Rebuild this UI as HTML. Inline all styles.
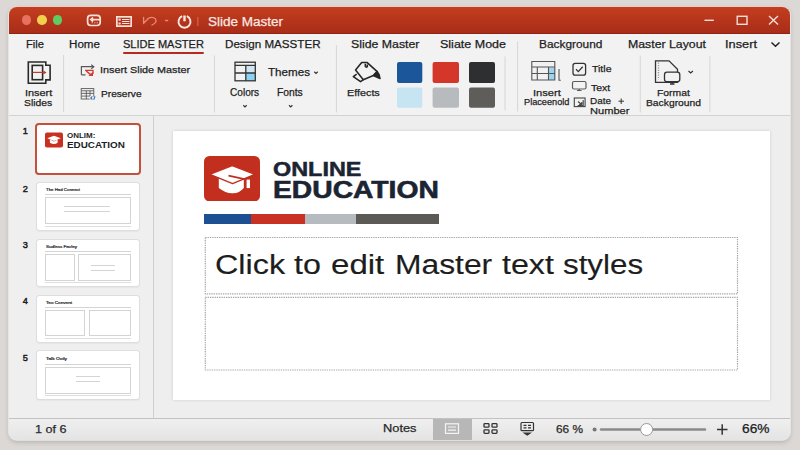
<!DOCTYPE html><html><head><meta charset="utf-8"><style>
*{margin:0;padding:0;box-sizing:border-box}
html,body{width:800px;height:450px;overflow:hidden}
body{background:#dbd8d5;font-family:"Liberation Sans",sans-serif;position:relative}
.t{position:absolute;white-space:nowrap;line-height:1;transform-origin:0 0;-webkit-text-stroke:0.25px currentColor}
.a{position:absolute}
</style></head><body><div class="a" style="left:9px;top:7px;width:780.5px;height:433px;border-radius:8px;background:#f2f2f2;overflow:hidden;box-shadow:0 0 0 1px rgba(255,255,255,.55),0 2px 5px rgba(0,0,0,.2)">
</div>
<div class="a" style="left:9px;top:7px;width:780.5px;height:27px;border-radius:8px 8px 0 0;background:linear-gradient(#c33e1f,#a82c18);box-shadow:inset 0 -1px 0 #902412,0 -0.5px 0 #e6b3a5"></div>
<div class="a" style="left:21.6px;top:15.3px;width:9.4px;height:9.4px;border-radius:50%;background:#e9715f"></div>
<div class="a" style="left:37.3px;top:15.3px;width:9.4px;height:9.4px;border-radius:50%;background:#f2cf4c"></div>
<div class="a" style="left:52.9px;top:15.3px;width:9.4px;height:9.4px;border-radius:50%;background:#5fcb63"></div>
<div class="t" style="left:207.50px;top:14.73px;font-size:13.08px;color:#fbe9e4;transform:scaleX(1.032);">Slide Master</div>
<svg class="a" style="left:0;top:0" width="800" height="34">
<g fill="none" stroke="#f8e2da" stroke-width="1.7">
<rect x="87.6" y="15.3" width="12.6" height="10.2" rx="3.2"/>
<path d="M100 19.6h-9.2M93 17.5l-2.2 2.1 2.2 2.1"/>
</g>
<path d="M91.5 22.8h8" stroke="#e9a593" stroke-width="1" stroke-dasharray="1.5 1"/>
<g fill="none" stroke="#f8e2da" stroke-width="1.7">
<rect x="116.85" y="16.85" width="14.3" height="9.3"/>
</g>
<g fill="#f8e2da"><rect x="118.5" y="18.6" width="2.2" height="2"/><rect x="118.5" y="22.5" width="2.2" height="2"/>
<rect x="122" y="19" width="7.5" height="1"/><rect x="122" y="21" width="7.5" height="1"/><rect x="122" y="23" width="7.5" height="1"/></g>
<g fill="none" stroke="#e98a72" stroke-width="1.3" stroke-linecap="round"><path d="M143.6 17.5v6M143.6 23.3l4.3-4.3"/><path d="M148 18.5q4.5-2.3 7.5 0.5q2 3.5-3.5 6"/></g>
<path d="M165 20.5h3.2" stroke="#e98a72" stroke-width="1.4"/>
<g fill="none" stroke="#fae8e3" stroke-width="1.9"><path d="M182.2 16.2a6 6 0 1 0 4.6 0"/></g>
<path d="M184.5 15.5v5.8" stroke="#fae8e3" stroke-width="2.4"/>
<path d="M197.9 17v9" stroke="#d8705c" stroke-width="1"/>
<g stroke="#f6ddd6" stroke-width="1.4" fill="none"><path d="M704.5 20.3h9.3"/><rect x="737.2" y="16.3" width="9.8" height="8"/><path d="M769 16l9 8.5M778 16l-9 8.5"/></g>
</svg>
<div class="t" style="left:26.00px;top:39.05px;font-size:11.05px;color:#1e1e1e;transform:scaleX(1.011);">File</div>
<div class="t" style="left:69.00px;top:39.05px;font-size:11.05px;color:#1e1e1e;transform:scaleX(1.052);">Home</div>
<div class="t" style="left:122.90px;top:39.05px;font-size:11.05px;color:#1e1e1e;">SLIDE MASTER</div>
<div class="t" style="left:225.00px;top:39.05px;font-size:11.05px;color:#1e1e1e;transform:scaleX(1.052);">Design MASSTER</div>
<div class="t" style="left:350.60px;top:39.05px;font-size:11.05px;color:#1e1e1e;transform:scaleX(1.114);">Slide Master</div>
<div class="t" style="left:439.50px;top:39.05px;font-size:11.05px;color:#1e1e1e;transform:scaleX(1.131);">Sliate Mode</div>
<div class="t" style="left:538.60px;top:39.05px;font-size:11.05px;color:#1e1e1e;transform:scaleX(1.075);">Background</div>
<div class="t" style="left:627.50px;top:39.05px;font-size:11.05px;color:#1e1e1e;transform:scaleX(1.114);">Master Layout</div>
<div class="t" style="left:725.00px;top:39.05px;font-size:11.05px;color:#1e1e1e;transform:scaleX(1.158);">Insert</div>
<div class="a" style="left:123px;top:51.5px;width:81px;height:2px;background:#b52b1c;border-radius:1px"></div>
<svg class="a" style="left:0;top:0" width="800" height="120">
<path d="M771.5 42.5l4 3.8 4-3.8" fill="none" stroke="#222" stroke-width="1.5"/>
<g stroke="#d6d6d6" stroke-width="1"><path d="M63.6 55v57M214.5 55.5v57M336.4 45v67.4M505 56.4v54M517.6 41.5v70M640.3 55.5v57M709.9 56.4v56"/></g>
</svg>
<svg class="a" style="left:0;top:0" width="800" height="116">
<!-- insert slides icon -->
<g fill="none" stroke="#2a2a2a" stroke-width="1.6">
<path d="M28.3 62h17.5v3.3h4.3v14.6h-4.3v3.3H28.3z"/>
<rect x="32.2" y="65.4" width="10.4" height="14.3"/>
</g>
<path d="M32.5 72.4h11.5" stroke="#c0392b" stroke-width="1.2"/>
<path d="M43.5 70.4l3 2-3 2z" fill="#c0392b"/>
<!-- insert slide master icon -->
<g fill="none" stroke-width="1.2">
<path d="M81.4 74.8V66.7H93.6M81.4 74.8H85.5" stroke="#585858"/>
<path d="M91.2 64.6L93.8 66.7L91.2 68.8" stroke="#585858"/>
<path d="M85 70.3H93V74" stroke="#d23b2e" stroke-width="1.3"/>
<path d="M86.2 71L91 74.8" stroke="#d23b2e" stroke-width="1.5"/>
</g>
<path d="M88.3 76H93V71.8Z" fill="#d23b2e"/>
<!-- preserve icon -->
<g fill="none" stroke="#5a5a5a" stroke-width="0.9">
<rect x="81.2" y="88.6" width="12.6" height="10.4"/>
<path d="M81.2 90.8h12.6M81.2 93.4h12.6M81.2 96.1h9M86.3 90.8v8.2M90 90.8v5.3"/>
</g>
<path d="M89.6 96.6h5.5v3h-5.5z" fill="#f2f2f2"/>
<path d="M92.3 96.4l-1.5 1.5 1.5 1.5M95 96.2l-1.2 3.4" stroke="#2f6fb5" stroke-width="1.1" fill="none"/>
<!-- themes grid icon -->
<rect x="245.8" y="65.3" width="9.3" height="7.7" fill="#cfe7f4"/>
<rect x="245.8" y="73" width="9.3" height="7.6" fill="#8fd1f1"/>
<g fill="none" stroke="#333" stroke-width="1.3">
<rect x="235" y="62.2" width="20.3" height="18.6"/>
<path d="M235 65.3h20.3M235 73h20.3M245.8 65.3v15.5"/>
</g>
<g fill="none" stroke="#333" stroke-width="1.2">
<path d="M314.3 71.8l1.7 1.6 1.7-1.6M243.3 105.3l1.7 1.6 1.7-1.6M289 105.3l1.7 1.6 1.7-1.6"/>
</g>
<!-- effects icon -->
<g transform="translate(340 55) scale(0.1111)" fill="none" stroke="#262626" stroke-width="14" stroke-linejoin="round">
<path d="M140 135L195 68H245L335 150L300 185L210 222Z"/>
<path d="M150 172L120 195L185 240L210 222"/>
<path d="M228 78V103Q236 116 246 103V86"/>
<path d="M300 185L335 150L352 178L360 212Z" fill="#262626"/>
</g>
<!-- swatches -->
<rect x="397" y="61.9" width="25.3" height="21" rx="2" fill="#1b569a"/>
<rect x="432.6" y="61.9" width="26.4" height="21" rx="2" fill="#d4372a"/>
<rect x="469" y="61.9" width="26" height="21" rx="2" fill="#2e2f31"/>
<rect x="397" y="87.5" width="25.3" height="20.2" rx="2" fill="#c6e4f1"/>
<rect x="432.6" y="87.5" width="26.4" height="20.2" rx="2" fill="#b8bbbe"/>
<rect x="469" y="87.5" width="26" height="20.2" rx="2" fill="#5e5d5a"/>
<!-- insert placeholder icon -->
<rect x="548.5" y="67.5" width="6.5" height="12.5" fill="#9ed5ee"/>
<g fill="none" stroke="#555" stroke-width="1.1">
<path d="M531.8 61.5h23v18.5h-23zM531.8 67h23M531.8 73.5h23M537.3 67v13M548.5 67v13M559 69v11.2h1.8"/>
</g>
<!-- title checkbox -->
<g fill="none" stroke="#333" stroke-width="1.3">
<rect x="573" y="63.3" width="12.6" height="11.8" rx="2.2"/>
<path d="M576 69.3l2.3 2.3 4.4-4.8"/>
</g>
<!-- text monitor -->
<g fill="none" stroke="#5a5a5a" stroke-width="1.2">
<rect x="572.5" y="81.5" width="13.5" height="7.5" rx="1.5"/>
<path d="M577 90.5h4.5M579.2 89v1.5"/>
</g>
<!-- date icon -->
<g fill="none" stroke="#444" stroke-width="1.1">
<rect x="574.3" y="98" width="10.8" height="8.6"/>
<path d="M578 101.5l3.5 3M581.8 104.5h-2.6M581.8 104.5v-2.6M583.2 100v5.5h-5.5"/>
</g>
<path d="M618.5 101.2h5.5M621.2 98.5v5.5" stroke="#333" stroke-width="1"/>
<!-- format background icon -->
<g fill="none" stroke="#333" stroke-width="1.3">
<path d="M655.5 60.8h13.5l8.5 8.5v13h-22z"/>
<path d="M658.5 62.5v17" stroke="#999" stroke-dasharray="1.2 1.2"/>
<rect x="664.5" y="72.2" width="15.3" height="9.5" rx="2.5" fill="#f2f2f2"/>
<path d="M670 84h4.5M672.2 81.8v2.2"/>
</g>
<path d="M688.5 71l2.2 2 2.2-2" fill="none" stroke="#333" stroke-width="1.2"/>
</svg>
<div class="t" style="left:24.70px;top:88.28px;font-size:9.59px;color:#1e1e1e;transform:scaleX(1.138);">Insert</div>
<div class="t" style="left:24.20px;top:97.73px;font-size:9.88px;color:#1e1e1e;transform:scaleX(1.047);">Slides</div>
<div class="t" style="left:99.70px;top:65.08px;font-size:9.59px;color:#1e1e1e;transform:scaleX(1.129);">Insert Slide Master</div>
<div class="t" style="left:100.90px;top:88.78px;font-size:9.59px;color:#1e1e1e;transform:scaleX(1.058);">Preserve</div>
<div class="t" style="left:267.50px;top:66.90px;font-size:10.76px;color:#1e1e1e;transform:scaleX(1.081);">Themes</div>
<div class="t" style="left:230.00px;top:87.69px;font-size:10.17px;color:#1e1e1e;transform:scaleX(0.993);">Colors</div>
<div class="t" style="left:276.50px;top:87.69px;font-size:10.17px;color:#1e1e1e;transform:scaleX(1.014);">Fonts</div>
<div class="t" style="left:347.20px;top:88.33px;font-size:9.88px;color:#1e1e1e;transform:scaleX(1.092);">Effects</div>
<div class="t" style="left:532.60px;top:87.53px;font-size:9.88px;color:#1e1e1e;transform:scaleX(1.129);">Insert</div>
<div class="t" style="left:524.00px;top:96.68px;font-size:9.59px;color:#1e1e1e;transform:scaleX(0.959);">Placeenold</div>
<div class="t" style="left:591.50px;top:63.53px;font-size:9.88px;color:#1e1e1e;transform:scaleX(1.065);">Title</div>
<div class="t" style="left:590.80px;top:82.53px;font-size:9.88px;color:#1e1e1e;transform:scaleX(1.059);">Text</div>
<div class="t" style="left:590.00px;top:96.43px;font-size:9.88px;color:#1e1e1e;transform:scaleX(1.006);">Date</div>
<div class="t" style="left:590.00px;top:106.13px;font-size:9.88px;color:#1e1e1e;transform:scaleX(1.124);">Number</div>
<div class="t" style="left:656.70px;top:87.53px;font-size:9.88px;color:#1e1e1e;transform:scaleX(1.051);">Format</div>
<div class="t" style="left:646.20px;top:97.53px;font-size:9.88px;color:#1e1e1e;transform:scaleX(1.043);">Background</div>
<div class="a" style="left:9px;top:114.5px;width:780.5px;height:1.5px;background:#d2d2d2"></div>
<div class="a" style="left:9px;top:116px;width:144px;height:302px;background:#efefef"></div>
<div class="a" style="left:153px;top:116px;width:1px;height:302px;background:#cfcfcf"></div>
<div class="a" style="left:154px;top:116px;width:635.5px;height:302px;background:#eeeeee"></div>
<div class="a" style="left:173px;top:131px;width:597px;height:269px;background:#fff;box-shadow:0 0 3px rgba(0,0,0,.14)"></div>
<div class="t" style="left:22.80px;top:126.85px;font-size:9.16px;color:#1a1a1a;-webkit-text-stroke:0.45px #1a1a1a;">1</div>
<div class="t" style="left:22.80px;top:184.85px;font-size:9.16px;color:#1a1a1a;-webkit-text-stroke:0.45px #1a1a1a;">2</div>
<div class="t" style="left:22.80px;top:240.65px;font-size:9.16px;color:#1a1a1a;-webkit-text-stroke:0.45px #1a1a1a;">3</div>
<div class="t" style="left:22.80px;top:296.95px;font-size:9.16px;color:#1a1a1a;-webkit-text-stroke:0.45px #1a1a1a;">4</div>
<div class="t" style="left:22.80px;top:353.55px;font-size:9.16px;color:#1a1a1a;-webkit-text-stroke:0.45px #1a1a1a;">5</div>
<div class="a" style="left:35px;top:123.3px;width:106.3px;height:51.5px;background:#fff;border:2.2px solid #c4513c;border-radius:4px"></div>
<svg class="a" style="left:45px;top:132.3px" width="18" height="16" viewBox="0 0 57 47">
<rect width="57" height="47" rx="6" fill="#c9301f"/>
<path d="M7 18L28.5 10L50 18L28.5 27Z" fill="#fff"/>
<path d="M15.5 22V32Q28.5 40 40 32V22L28.5 28Z" fill="#fff"/>
</svg>
<div class="t" style="left:66.80px;top:132.16px;font-size:7.85px;font-weight:bold;-webkit-text-stroke:0;color:#1c1f26;transform:scaleX(1.018);">ONLIM:</div>
<div class="t" style="left:66.80px;top:139.88px;font-size:9.59px;font-weight:bold;-webkit-text-stroke:0;color:#1c1f26;transform:scaleX(1.030);">EDUCATION</div>
<div class="a" style="left:37px;top:182.7px;width:102px;height:46.900000000000006px;background:#fff;border-radius:2.5px;box-shadow:0 0 0 1px #dedede,0 1px 2px rgba(0,0,0,.12)"></div>
<div class="t" style="left:46.00px;top:187.91px;font-size:4.36px;color:#222;transform:scaleX(0.995);-webkit-text-stroke:0.2px #222;">The Had Connect</div>
<div class="a" style="left:45px;top:194px;width:86px;height:1px;background:#d4d4d4"></div>
<div class="a" style="left:45px;top:197px;width:86.4px;height:27px;border:1px solid #d4d4d4"></div>
<div class="a" style="left:64px;top:206px;width:46px;height:1px;background:#d4d4d4"></div>
<div class="a" style="left:64px;top:210.5px;width:46px;height:1px;background:#d4d4d4"></div>
<div class="a" style="left:45px;top:226px;width:86px;height:1px;background:#dedede"></div>
<div class="a" style="left:37px;top:239.6px;width:102px;height:46.400000000000006px;background:#fff;border-radius:2.5px;box-shadow:0 0 0 1px #dedede,0 1px 2px rgba(0,0,0,.12)"></div>
<div class="t" style="left:46.00px;top:244.81px;font-size:4.36px;color:#222;transform:scaleX(1.048);-webkit-text-stroke:0.2px #222;">Sudless Favley</div>
<div class="a" style="left:45px;top:251px;width:86px;height:1px;background:#d4d4d4"></div>
<div class="a" style="left:45px;top:253.6px;width:30px;height:27px;border:1px solid #d4d4d4"></div>
<div class="a" style="left:78.4px;top:253.6px;width:53px;height:27px;border:1px solid #d4d4d4"></div>
<div class="a" style="left:91px;top:265px;width:24px;height:1px;background:#d4d4d4"></div>
<div class="a" style="left:91px;top:269.5px;width:24px;height:1px;background:#d4d4d4"></div>
<div class="a" style="left:45px;top:282px;width:86px;height:1px;background:#dedede"></div>
<div class="a" style="left:37px;top:296.2px;width:102px;height:46.19999999999999px;background:#fff;border-radius:2.5px;box-shadow:0 0 0 1px #dedede,0 1px 2px rgba(0,0,0,.12)"></div>
<div class="t" style="left:46.00px;top:300.61px;font-size:4.36px;color:#222;transform:scaleX(1.062);-webkit-text-stroke:0.2px #222;">Teo Convent</div>
<div class="a" style="left:45px;top:307px;width:86px;height:1px;background:#d4d4d4"></div>
<div class="a" style="left:44.8px;top:309.5px;width:40.5px;height:26.5px;border:1px solid #d4d4d4"></div>
<div class="a" style="left:89.3px;top:309.5px;width:42px;height:26.5px;border:1px solid #d4d4d4"></div>
<div class="a" style="left:45px;top:338px;width:86px;height:1px;background:#dedede"></div>
<div class="a" style="left:37px;top:351.3px;width:102px;height:47.5px;background:#fff;border-radius:2.5px;box-shadow:0 0 0 1px #dedede,0 1px 2px rgba(0,0,0,.12)"></div>
<div class="t" style="left:46.00px;top:357.11px;font-size:4.36px;color:#222;transform:scaleX(1.111);-webkit-text-stroke:0.2px #222;">Talk Ooily</div>
<div class="a" style="left:45px;top:363.5px;width:86px;height:1px;background:#d4d4d4"></div>
<div class="a" style="left:44.8px;top:366.5px;width:86.4px;height:27px;border:1px solid #d4d4d4"></div>
<div class="a" style="left:76px;top:375.5px;width:24px;height:1px;background:#d4d4d4"></div>
<div class="a" style="left:76px;top:380.5px;width:24px;height:1px;background:#d4d4d4"></div>
<div class="a" style="left:45px;top:395px;width:86px;height:1px;background:#dedede"></div>
<svg class="a" style="left:204.4px;top:155.6px" width="56" height="45.4" viewBox="0 0 56 45.4">
<rect width="56" height="45.4" rx="5.5" fill="#c22f1e"/>
<path d="M14.8 21.5V32Q22 37.5 28.6 37.2Q35 37.5 39.8 32V21.5L28.6 27.5Z" fill="#fff"/>
<path d="M5.8 18.3L28.2 9.6L50.8 18.3L28.6 27.6Z" fill="#fff" stroke="#c22f1e" stroke-width="1.3" stroke-linejoin="round"/>
<path d="M24.5 19.6L44.2 24V32" fill="none" stroke="#c22f1e" stroke-width="1.7"/>
<rect x="42.6" y="23.6" width="3.4" height="8.5" fill="#fff"/>
</svg>
<div class="t" style="left:273.00px;top:158.65px;font-size:20.49px;font-weight:bold;-webkit-text-stroke:0;color:#1b2432;transform:scaleX(1.143);-webkit-text-stroke:0.5px #1b2432;">ONLINE</div>
<div class="t" style="left:273.30px;top:178.25px;font-size:24.27px;font-weight:bold;-webkit-text-stroke:0;color:#1b2432;transform:scaleX(1.164);-webkit-text-stroke:0.6px #1b2432;">EDUCATION</div>
<div class="a" style="left:204px;top:213.6px;width:47px;height:10.4px;background:#1d4f93"></div>
<div class="a" style="left:251px;top:213.6px;width:53.5px;height:10.4px;background:#c93223"></div>
<div class="a" style="left:304.5px;top:213.6px;width:51.7px;height:10.4px;background:#b6bbbf"></div>
<div class="a" style="left:356.2px;top:213.6px;width:82.5px;height:10.4px;background:#5b5a56"></div>
<svg class="a" style="left:0;top:0" width="800" height="450"><g fill="none" stroke="#a9a9a9" stroke-width="1.2" stroke-dasharray="1.4 0.9"><rect x="205.3" y="237.5" width="532.2" height="56.3"/><rect x="205.3" y="297.3" width="532.2" height="72.7"/></g></svg>
<div class="t" style="left:214.60px;top:250.52px;font-size:27.62px;color:#1d1d1d;transform:scaleX(1.172);-webkit-text-stroke:0.15px #1d1d1d;">Click</div>
<div class="t" style="left:293.60px;top:250.52px;font-size:27.62px;color:#1d1d1d;transform:scaleX(1.168);-webkit-text-stroke:0.15px #1d1d1d;">to</div>
<div class="t" style="left:331.00px;top:250.52px;font-size:27.62px;color:#1d1d1d;transform:scaleX(1.197);-webkit-text-stroke:0.15px #1d1d1d;">edit</div>
<div class="t" style="left:394.80px;top:250.52px;font-size:27.62px;color:#1d1d1d;transform:scaleX(1.152);-webkit-text-stroke:0.15px #1d1d1d;">Master</div>
<div class="t" style="left:501.60px;top:250.52px;font-size:27.62px;color:#1d1d1d;transform:scaleX(1.166);-webkit-text-stroke:0.15px #1d1d1d;">text</div>
<div class="t" style="left:563.40px;top:250.52px;font-size:27.62px;color:#1d1d1d;transform:scaleX(1.135);-webkit-text-stroke:0.15px #1d1d1d;">styles</div>
<div class="a" style="left:9px;top:418px;width:780.5px;height:22px;border-radius:0 0 8px 8px;background:linear-gradient(#efefef,#e4e4e4);border-top:1px solid #c2c2c2"></div>
<div class="t" style="left:34.60px;top:423.95px;font-size:11.05px;color:#2b2b2b;transform:scaleX(1.140);">1 of 6</div>
<div class="a" style="left:433px;top:418.5px;width:38.6px;height:21.3px;background:#b7b7b7"></div>
<div class="t" style="left:383.40px;top:423.45px;font-size:11.05px;color:#2a2a2a;transform:scaleX(1.161);">Notes</div>
<svg class="a" style="left:0;top:405px" width="800" height="45">
<g fill="none" stroke="#f4f4f4" stroke-width="1.2"><rect x="445.5" y="18.8" width="13" height="9.6"/><path d="M448 22h8M448 25.2h8"/></g>
<g fill="none" stroke="#333" stroke-width="1.3"><rect x="484" y="18.6" width="5" height="3.6" rx="0.8"/><rect x="492" y="18.6" width="5" height="3.6" rx="0.8"/><rect x="484" y="24.8" width="5" height="3.6" rx="0.8"/><rect x="492" y="24.8" width="5" height="3.6" rx="0.8"/></g>
<g fill="none" stroke="#333" stroke-width="1.2"><rect x="521" y="17.5" width="12.5" height="8.2" rx="1"/><path d="M523.5 20.3h3M523.5 22.8h3M528 20.3h3M528 22.8h3"/></g>
<path d="M522.5 27.5h9.5l-4.75 3.2z" fill="#333"/>
<circle cx="594.6" cy="24.5" r="2" fill="#777"/>
<path d="M601 24.5h104" stroke="#8a8a8a" stroke-width="2.4" stroke-linecap="round"/>
<circle cx="646.6" cy="24.5" r="6" fill="#fff" stroke="#9a9a9a" stroke-width="1"/>
<path d="M717 24.5h10.5M722.2 19.3v10.5" stroke="#333" stroke-width="1.5"/>
</svg>
<div class="t" style="left:556.00px;top:424.25px;font-size:11.05px;color:#2a2a2a;transform:scaleX(1.072);">66 %</div>
<div class="t" style="left:741.50px;top:423.91px;font-size:11.92px;color:#1e1e1e;transform:scaleX(1.153);">66%</div></body></html>
